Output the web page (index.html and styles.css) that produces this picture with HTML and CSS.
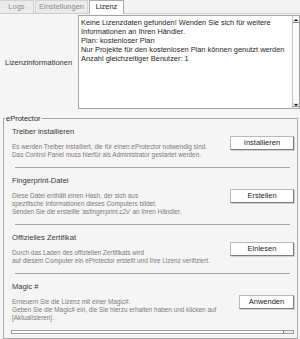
FILE: index.html
```html
<!DOCTYPE html>
<html lang="de">
<head>
<meta charset="utf-8">
<title>Lizenz</title>
<link rel="stylesheet" href="styles.css">
</head>
<body>
<div class="tabs">
  <div class="tab tab-logs">Logs</div>
  <div class="tab tab-settings">Einstellungen</div>
  <div class="tab tab-license active">Lizenz</div>
</div>

<div class="info">
  <div class="info-label">Lizenzinformationen</div>
  <div class="info-box">
    <div class="info-text">
      <div>Keine Lizenzdaten gefunden! Wenden Sie sich für weitere</div>
      <div>Informationen an Ihren Händler.</div>
      <div>Plan: kostenloser Plan</div>
      <div>Nur Projekte für den kostenlosen Plan können genutzt werden</div>
      <div>Anzahl gleichzeitiger Benutzer: 1</div>
    </div>
    <div class="vscroll">
      <span class="arrow arrow-up"></span>
      <span class="arrow arrow-down"></span>
    </div>
  </div>
</div>

<fieldset class="group">
  <legend>eProtector</legend>

  <div class="section first">
    <div class="section-body">
      <div class="section-title">Treiber installieren</div>
      <div class="section-desc">Es werden Treiber installiert, die für einen eProtector notwendig sind.<br>Das Control Panel muss hierfür als Administrator gestartet werden.</div>
    </div>
    <button class="btn">Installieren</button>
  </div>
  <div class="sep"></div>

  <div class="section">
    <div class="section-body">
      <div class="section-title">Fingerprint-Datei</div>
      <div class="section-desc">Diese Datei enthält einen Hash, der sich aus<br>spezifische Informationen dieses Computers bildet.<br>Senden Sie die erstellte 'asfingerprint.c2v' an Ihren Händler.</div>
    </div>
    <button class="btn">Erstellen</button>
  </div>
  <div class="sep"></div>

  <div class="section">
    <div class="section-body">
      <div class="section-title">Offizielles Zertifikat</div>
      <div class="section-desc">Durch das Laden des offiziellen Zertifikats wird<br>auf diesem Computer ein eProtector erstellt und Ihre Lizenz verifiziert.</div>
    </div>
    <button class="btn">Einlesen</button>
  </div>
  <div class="sep"></div>

  <div class="section">
    <div class="section-body">
      <div class="section-title">Magic #</div>
      <div class="section-desc">Erneuern Sie die Lizenz mit einer Magic#.<br>Geben Sie die Magic# ein, die Sie hierzu erhalten haben und klicken auf<br>[Aktualisieren].</div>
    </div>
    <button class="btn btn-narrow">Anwenden</button>
  </div>

  <div class="hbar"><span class="hbar-thumb"></span></div>
</fieldset>
</body>
</html>
```

FILE: styles.css
```css
html, body {
  margin: 0;
  padding: 0;
}

body {
  width: 300px;
  height: 339px;
  overflow: hidden;
  background: #f5f5f5;
  font-family: "Liberation Sans", Arial, sans-serif;
  color: #222;
}

/* Tabs */
.tabs {
  display: flex;
  gap: 1px;
  height: 13px;
  border-bottom: 1px solid #cfcfcf;
  background: #f3f3f3;
}

.tab {
  box-sizing: border-box;
  height: 13px;
  border: 1px solid #d2d2d2;
  border-bottom: none;
  background: #ebebeb;
  color: #8c8c8c;
  font-size: 7.5px;
  line-height: 12px;
  text-align: center;
}

.tab-logs { width: 34px; border-left: none; }
.tab-settings { width: 53px; }
.tab-license { width: 35px; }

.tab.active {
  height: 14px;
  background: #fff;
  border-color: #a9a9a9;
  color: #222;
}

/* License info row */
.info {
  display: flex;
  margin-top: 1px;
  height: 94px;
}

.info-label {
  width: 78px;
  box-sizing: border-box;
  padding-left: 5px;
  align-self: center;
  font-size: 7.5px;
  line-height: 9px;
  color: #333;
}

.info-box {
  flex: 1;
  display: flex;
  box-sizing: border-box;
  border: 1px solid #a4a4a4;
  background: #fff;
}

.info-text {
  flex: 1;
  padding: 2px 0 0 2px;
  font-size: 7.4px;
  line-height: 9px;
  white-space: nowrap;
  color: #1e1e1e;
}

.vscroll {
  width: 6px;
  border-left: 1px solid #c4c4c4;
  background: #fbfbfb;
  display: flex;
  flex-direction: column;
  justify-content: space-between;
  padding: 2px 0 1px;
}

.arrow {
  display: block;
  width: 6px;
  height: 5px;
  box-sizing: border-box;
  background: #e6e6e6;
  border-top: 1px solid #fff;
  border-bottom: 1px solid #8a8a8a;
  position: relative;
}

.arrow::after {
  content: "";
  position: absolute;
  left: 1px;
  width: 0;
  height: 0;
  border-left: 2px solid transparent;
  border-right: 2px solid transparent;
}

.arrow-up::after {
  top: 0;
  border-bottom: 2px solid #111;
}

.arrow-down::after {
  top: 1px;
  border-top: 2px solid #111;
}

/* Group */
.group {
  margin: 5px 2px 0 3px;
  padding: 0 0 4px 0;
  border: 1px solid #a9a9a9;
  min-width: 0;
}

.group legend {
  margin-left: 1px;
  padding: 0 1px;
  font-size: 7.5px;
  line-height: 9px;
  color: #2a2a2a;
}

.section {
  display: flex;
  align-items: center;
  padding: 8px 3px 8px 8px;
}

.section.first {
  padding-top: 4px;
}

.section-title {
  font-size: 7.6px;
  line-height: 10px;
  color: #383838;
  margin-bottom: 6px;
}

.section-desc {
  font-size: 6.4px;
  line-height: 8px;
  color: #7a7a7a;
  white-space: nowrap;
}

.btn {
  margin-left: auto;
  width: 64px;
  height: 14px;
  padding: 0;
  box-sizing: border-box;
  background: #fff;
  border: 1px solid #b9b9b9;
  border-right-color: #7d7d7d;
  border-bottom-color: #7d7d7d;
  box-shadow: 1px 1px 0 #d0d0d0;
  font-family: "Liberation Sans", Arial, sans-serif;
  font-size: 7.5px;
  line-height: 12px;
  color: #1e1e1e;
}

.btn-narrow {
  width: 55px;
}

.sep {
  margin: 0 7px 0 11px;
  border-top: 1px solid #a3a3a3;
}

.hbar {
  display: flex;
  justify-content: flex-end;
  margin: 0 3px 0 7px;
  height: 4px;
  box-sizing: border-box;
  border: 1px solid #9c9c9c;
  background: #fff;
}

.hbar-thumb {
  width: 9px;
  border-left: 1px solid #6f6f6f;
  background: #efefef;
}
```
